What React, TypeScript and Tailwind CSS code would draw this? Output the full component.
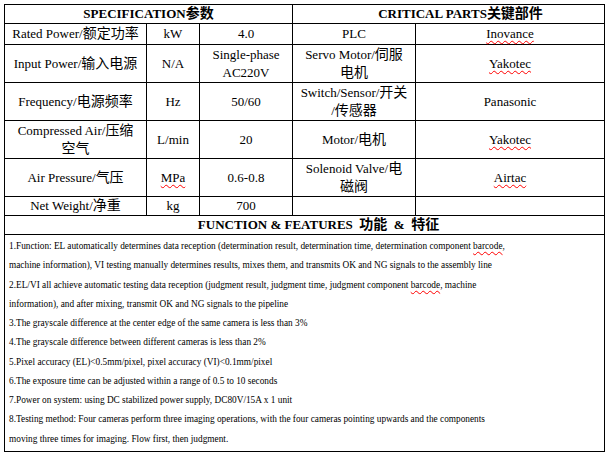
import React from "react";

const CJK = /([\u3400-\u9fff\u3000-\u303f\uff00-\uffef]+)/;

// Latin text in the serif face, Chinese runs a touch larger like the Word doc
function T({ s, cjk = "text-[14px]" }: { s: string; cjk?: string }) {
  return (
    <>
      {s.split(CJK).map((part, i) =>
        i % 2 === 1 ? (
          <span key={i} className={cjk}>
            {part}
          </span>
        ) : (
          <React.Fragment key={i}>{part}</React.Fragment>
        )
      )}
    </>
  );
}

function Squiggle({ children }: { children: React.ReactNode }) {
  return (
    <span className="underline decoration-wavy decoration-[#ff0000] decoration-1 underline-offset-2">
      {children}
    </span>
  );
}

type Row = {
  h: string;
  label: string[];
  unit: React.ReactNode;
  value: string[];
  part: string[];
  brand: React.ReactNode;
};

const ROWS: Row[] = [
  { h: "h-[21px]", label: ["Rated Power/额定功率"], unit: "kW", value: ["4.0"], part: ["PLC"], brand: <Squiggle>Inovance</Squiggle> },
  { h: "h-[38px]", label: ["Input Power/输入电源"], unit: "N/A", value: ["Single-phase", "AC220V"], part: ["Servo Motor/伺服", "电机"], brand: <Squiggle>Yakotec</Squiggle> },
  { h: "h-[38px]", label: ["Frequency/电源频率"], unit: "Hz", value: ["50/60"], part: ["Switch/Sensor/开关", "/传感器"], brand: "Panasonic" },
  { h: "h-[38px]", label: ["Compressed Air/压缩", "空气"], unit: "L/min", value: ["20"], part: ["Motor/电机"], brand: <Squiggle>Yakotec</Squiggle> },
  { h: "h-[38px]", label: ["Air Pressure/气压"], unit: <Squiggle>MPa</Squiggle>, value: ["0.6-0.8"], part: ["Solenoid Valve/电", "磁阀"], brand: <Squiggle>Airtac</Squiggle> },
  { h: "h-[18px]", label: ["Net Weight/净重"], unit: "kg", value: ["700"], part: [], brand: "" },
];

const FEATURES: React.ReactNode[][] = [
  [
    <>1.Function: EL automatically determines data reception (determination result, determination time, determination component <Squiggle>barcode</Squiggle>,</>,
    "machine information), VI testing manually determines results, mixes them, and transmits OK and NG signals to the assembly line",
  ],
  [
    <>2.EL/VI all achieve automatic testing data reception (judgment result, judgment time, judgment component <Squiggle>barcode</Squiggle>, machine</>,
    "information), and after mixing, transmit OK and NG signals to the pipeline",
  ],
  ["3.The grayscale difference at the center edge of the same camera is less than 3%"],
  ["4.The grayscale difference between different cameras is less than 2%"],
  ["5.Pixel accuracy (EL)<0.5mm/pixel, pixel accuracy (VI)<0.1mm/pixel"],
  ["6.The exposure time can be adjusted within a range of 0.5 to 10 seconds"],
  ["7.Power on system: using DC stabilized power supply, DC80V/15A x 1 unit"],
  [
    "8.Testing method: Four cameras perform three imaging operations, with the four cameras pointing upwards and the components",
    "moving three times for imaging. Flow first, then judgment.",
  ],
];

function Lines({ lines }: { lines: string[] }) {
  return (
    <>
      {lines.map((l, i) => (
        <div key={i} className="whitespace-nowrap">
          <T s={l} />
        </div>
      ))}
    </>
  );
}

const serif = "font-['Liberation_Serif','Noto_Sans_CJK_SC',serif]";
const cell = `border border-black p-0 text-center align-middle text-[13px] leading-[18px] ${serif}`;

export default function App() {
  return (
    <div className={`min-h-screen w-[607px] bg-white pl-[4px] pt-[4px] text-black ${serif}`}>
      <table className={`table-fixed border-collapse w-[600px] ${serif}`}>
        <colgroup>
          <col className="w-[142px]" />
          <col className="w-[53px]" />
          <col className="w-[93px]" />
          <col className="w-[123px]" />
          <col className="w-[189px]" />
        </colgroup>
        <tbody>
          {/* Section headers */}
          <tr className="h-[18px]">
            <td colSpan={3} className={`${cell} font-bold`}>
              <T s="SPECIFICATION参数" />
            </td>
            <td colSpan={2} className={`${cell} font-bold pl-6`}>
              <T s="CRITICAL PARTS关键部件" />
            </td>
          </tr>

          {ROWS.map((r, i) => (
            <tr key={i} className={r.h}>
              <td className={cell}>
                <Lines lines={r.label} />
              </td>
              <td className={cell}>{r.unit}</td>
              <td className={cell}>
                <Lines lines={r.value} />
              </td>
              <td className={cell}>
                <Lines lines={r.part} />
              </td>
              <td className={cell}>{r.brand}</td>
            </tr>
          ))}

          {/* Function & features */}
          <tr className="h-[19px]">
            <td colSpan={5} className={`${cell} font-bold pl-7`}>
              FUNCTION &amp; FEATURES&nbsp;&nbsp;<span className="text-[14px]">功能</span>&nbsp;&nbsp;&amp;&nbsp;&nbsp;<span className="text-[14px]">特征</span>
            </td>
          </tr>
          <tr>
            <td colSpan={5} className={`border border-black px-[4px] py-[2px] text-left align-top text-[9.3px] leading-[19.25px] ${serif}`}>
              {FEATURES.map((p, i) => (
                <div key={i}>
                  {p.map((l, j) => (
                    <div key={j} className="whitespace-nowrap">
                      {l}
                    </div>
                  ))}
                </div>
              ))}
            </td>
          </tr>
        </tbody>
      </table>
    </div>
  );
}
